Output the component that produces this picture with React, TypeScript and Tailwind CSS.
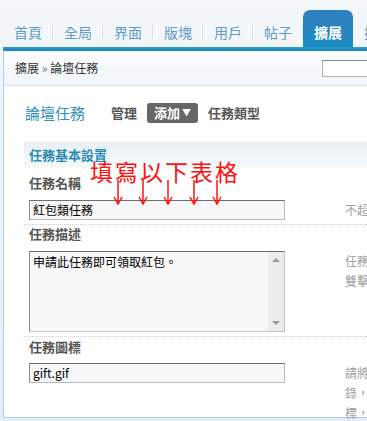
import React from 'react';

const tabs = ['首頁', '全局', '界面', '版塊', '用戶', '帖子'];
const arrowXs = [8, 33, 58, 84, 107];

const Field = ({ value }: { value: string }) => (
  <div className="h-[20px] w-[256px] shrink-0 border border-[#b9b9b9] border-t-[#6f6f6f] border-l-[#8a8a8a] bg-[#f7f7f7] pl-[3px] text-[12px] leading-[18px] text-black">
    {value}
  </div>
);

const Hint = ({ lines }: { lines: string[] }) => (
  <div className="ml-[60px] shrink-0 whitespace-nowrap text-[12px] leading-[20px] text-[#a0a0a0]">
    {lines.map((l) => (
      <div key={l}>{l}</div>
    ))}
  </div>
);

const App = () => {
  return (
    <div className="relative h-[421px] w-[367px] overflow-hidden bg-gradient-to-b from-[#f4f7fa] to-[#e4edf5] font-['Noto_Sans_CJK_TC','Noto_Sans_CJK_SC',sans-serif]">
      {/* top tabs */}
      <div className="flex h-[47px] items-end pl-[3px]">
        {tabs.map((t) => (
          <div key={t} className="relative flex h-[37px] w-[50px] shrink-0 items-center justify-center pt-[7px] text-[14px] text-[#5f9cc6]">
            {t}
            <span className="absolute right-0 top-[15px] h-[14px] w-px bg-[#d3e1ec]"></span>
          </div>
        ))}
        <div className="flex h-[37px] w-[50px] shrink-0 items-center justify-center rounded-t-[7px] bg-gradient-to-b from-[#2f7fbe] to-[#1a8cc2] pt-[7px] text-[14px] font-bold text-white">
          擴展
        </div>
        <div className="flex h-[37px] w-[50px] shrink-0 items-center justify-center pt-[7px] text-[14px] text-[#5f9cc6]">
          擴充
        </div>
      </div>
      <div className="ml-[3px] h-[4px] bg-gradient-to-b from-[#2aa0cd] to-[#1886ba]"></div>

      {/* panel */}
      <div className="ml-[3px] h-[367px] border-b border-l border-[#b3cde0] bg-white">
        <div className="flex h-[35px] items-center border-b border-[#d6e2eb] bg-gradient-to-b from-[#fbfcfd] to-[#f2f6f9] pl-[11px]">
          <span className="w-[307px] shrink-0 text-[12px] text-[#333]">
            擴展 <span className="text-[#777]">»</span> 論壇任務
          </span>
          <div className="h-[17px] w-[60px] shrink-0 border border-[#b0b0b0] border-t-[#8a8a8a] bg-white"></div>
        </div>

        <div className="pl-[20px]">
          <div className="flex h-[54px] items-center">
            <span className="ml-[1px] text-[15px] text-[#2d8fba]">論壇任務</span>
            <span className="ml-[26px] text-[13px] font-bold text-[#555]">管理</span>
            <span className="ml-[10px] flex h-[20px] items-center rounded-[3px] bg-[#666] px-[7px] text-[13px] font-bold text-white">
              添加<span className="ml-[2px] text-[9px]">▼</span>
            </span>
            <span className="ml-[10px] text-[13px] font-bold text-[#555]">任務類型</span>
          </div>

          <div className="mt-[2px] flex h-[26px] items-center bg-gradient-to-b from-[#e8f0f6] to-[#f6f9fb] pl-[5px] text-[13px] font-bold text-[#2b8bb5]">
            任務基本設置
          </div>

          <div className="border-b border-dotted border-[#cfcfcf] pb-[4px]">
            <div className="pl-[5px] pt-[6px] text-[13px] font-bold leading-[18px] text-[#555]">任務名稱</div>
            <div className="mt-[8px] flex pl-[5px]">
              <Field value="紅包類任務" />
              <Hint lines={['不超過 30 個字元']} />
            </div>
          </div>

          <div className="border-b border-dotted border-[#cfcfcf] pb-[4px]">
            <div className="pl-[5px] text-[13px] font-bold leading-[18px] text-[#555]">任務描述</div>
            <div className="mt-[8px] flex pl-[5px]">
              <div className="flex h-[81px] w-[256px] shrink-0 border border-[#c4c4c4] border-t-[#6f6f6f] border-l-[#8a8a8a] bg-[#f8f8f8]">
                <div className="flex-1 pl-[3px] pt-[1px] text-[12px] leading-[18px] text-black">申請此任務即可領取紅包。</div>
                <div className="flex w-[16px] flex-col items-center justify-between bg-[#ececec] py-[6px]">
                  <span className="h-0 w-0 border-x-[4px] border-b-[4px] border-x-transparent border-b-[#9a9a9a]"></span>
                  <span className="h-0 w-0 border-x-[4px] border-t-[4px] border-x-transparent border-t-[#9a9a9a]"></span>
                </div>
              </div>
              <Hint lines={['任務的描述，支持 HTML', '雙擊輸入框可擴大']} />
            </div>
          </div>

          <div>
            <div className="pl-[5px] pt-[1px] text-[13px] font-bold leading-[18px] text-[#555]">任務圖標</div>
            <div className="mt-[7px] flex pl-[5px]">
              <Field value="gift.gif" />
              <Hint lines={['請將圖標上傳到目', '錄，然後填寫文件名', '標，也可直接填寫']} />
            </div>
          </div>
        </div>
      </div>

      {/* handwritten note */}
      <div className="absolute left-[90px] top-[157px] text-[23px] leading-[28px] tracking-[2px] text-[#ff1010]">
        填寫以下表格
      </div>
      <svg className="absolute left-[110px] top-[178px]" width="115" height="28" viewBox="0 0 115 28">
        {arrowXs.map((x) => (
          <g key={x} stroke="#ff1010" strokeWidth="1.5" fill="none">
            <line x1={x} y1="2" x2={x} y2="26" />
            <polyline points={`${x - 4},19 ${x},26 ${x + 4},19`} />
          </g>
        ))}
      </svg>
    </div>
  );
};

export default App;
